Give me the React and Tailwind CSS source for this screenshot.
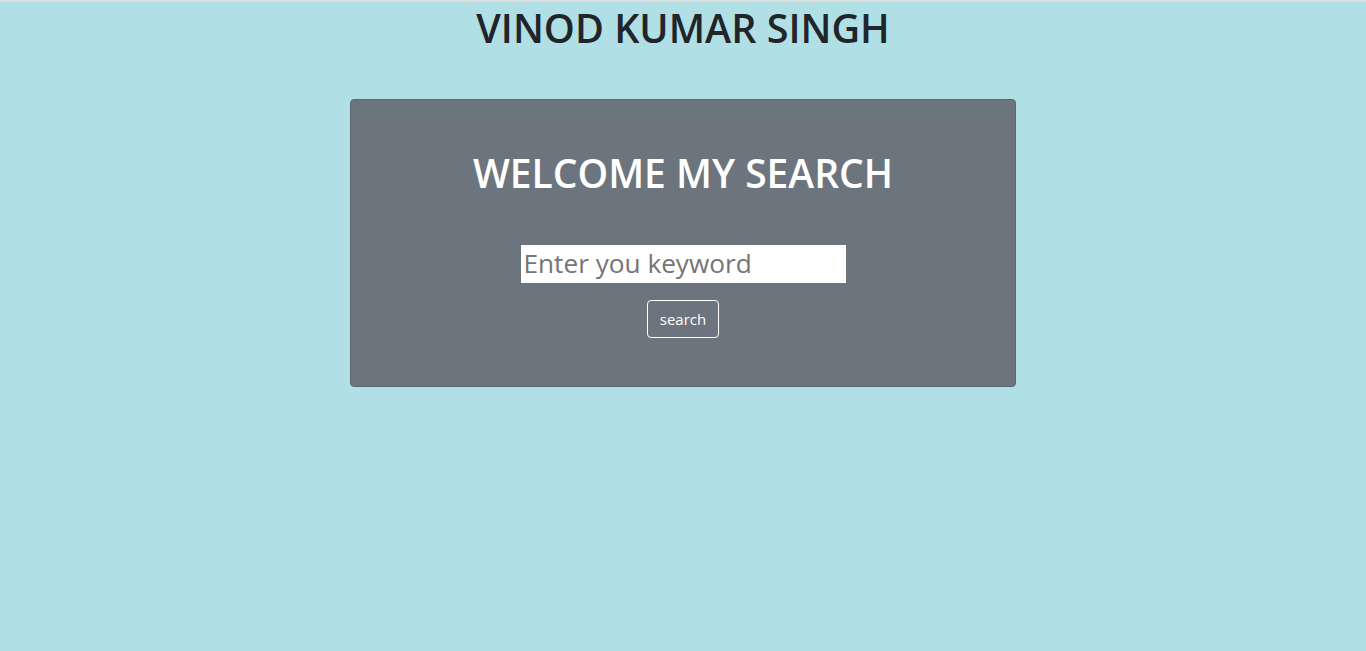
import React from 'react';

const App = () => {
  return (
    <div className="min-h-[651px] bg-[#b0dfe5] border-t-2 border-[#dcdcdc] font-['Open_Sans',sans-serif]">
      <h1 className="text-center text-[39.5px] leading-[48px] font-semibold text-[#212529] pt-[2px]">
        VINOD KUMAR SINGH
      </h1>

      <div className="w-[666px] mx-auto mt-[47px] h-[288px] bg-[#6c757d] border border-[#5f676e] rounded-[4px] flex flex-col items-center">
        <h2 className="text-white text-[39px] leading-[48px] font-semibold mt-[49px]">
          WELCOME MY SEARCH
        </h2>
        <input
          type="text"
          placeholder="Enter you keyword"
          className="mt-[48px] w-[325px] h-[38px] bg-white text-[26.2px] px-[3px] text-[#444] placeholder-[#757575] outline-none"
        />
        <button className="mt-[17px] h-[38px] px-[12px] border border-white rounded-[4px] text-white text-[15px]">
          search
        </button>
      </div>
    </div>
  );
};

export default App;
